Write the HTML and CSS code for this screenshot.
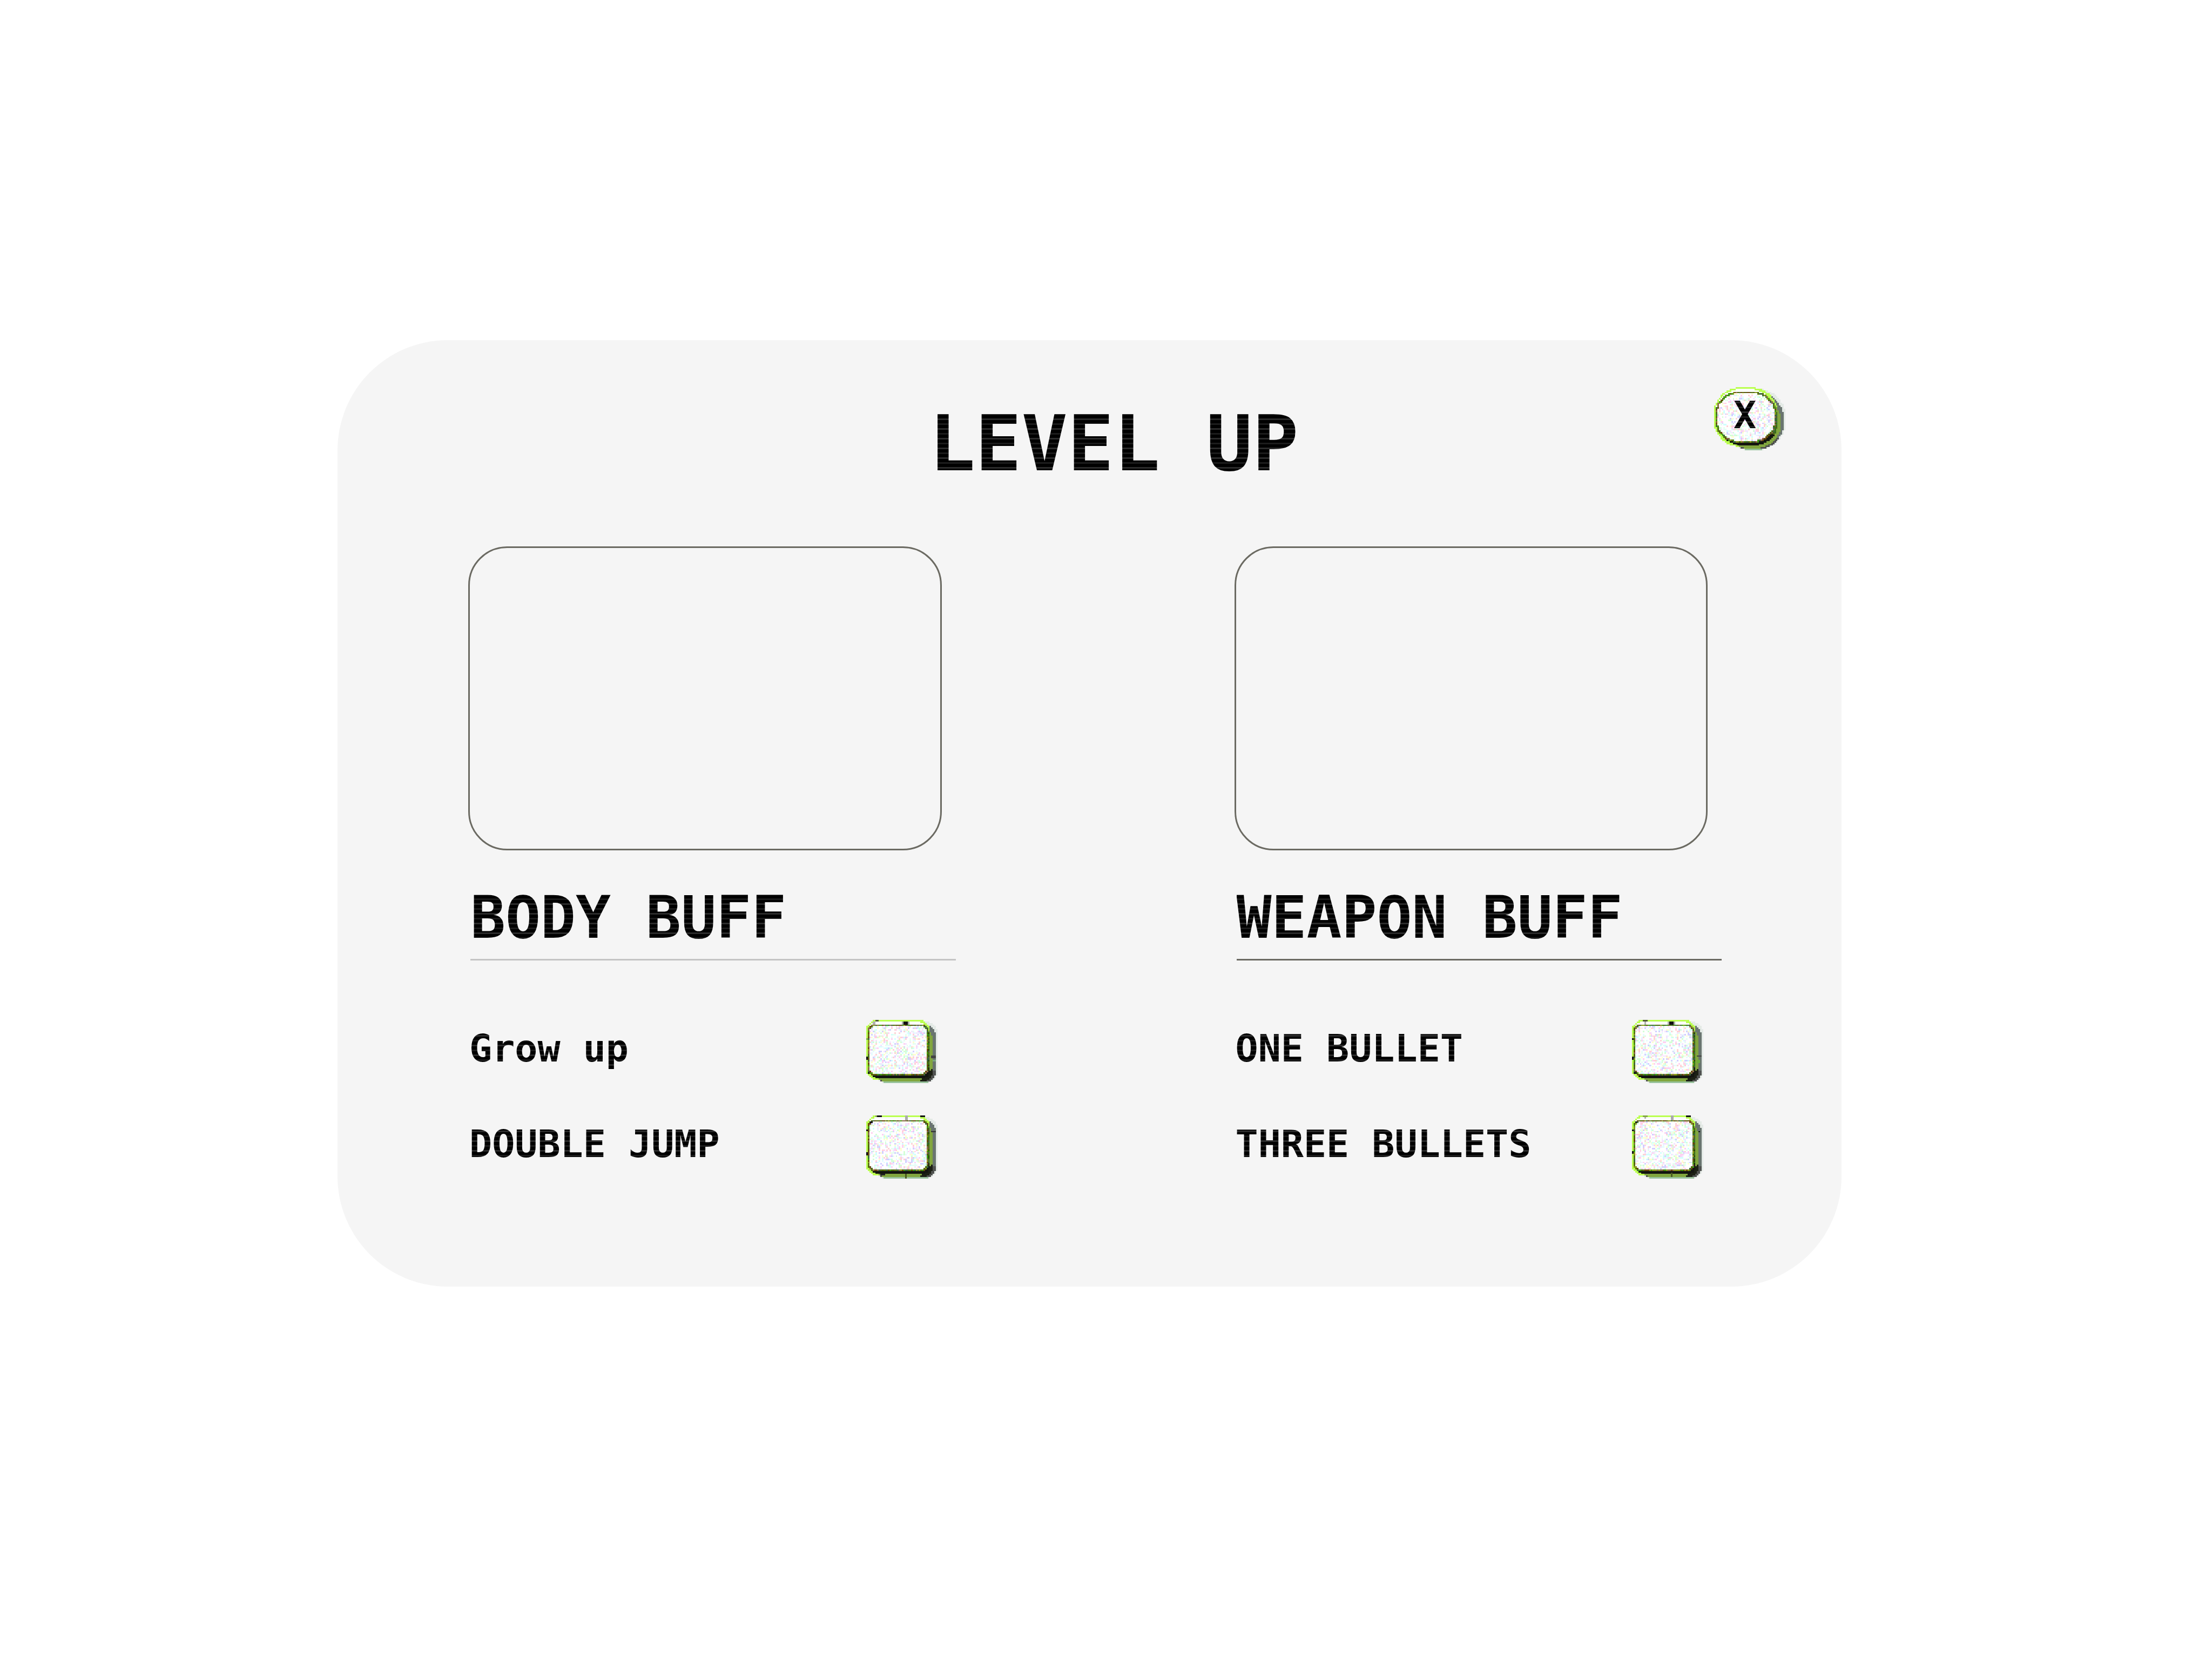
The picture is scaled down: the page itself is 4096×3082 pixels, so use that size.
FILE: index.html
```html
<!DOCTYPE html>
<html lang="en">
<head>
<meta charset="utf-8">
<meta name="viewport" content="width=device-width, initial-scale=1">
<title>Level up</title>
<link rel="stylesheet" href="styles.css">
</head>
<body>
<main class="panel">
  <header class="panel-header">
    <h1 class="title ink">LEVEL UP</h1>
    <button class="key close" type="button" aria-label="Close">
      <svg class="key-art" data-key="round" viewBox="0 0 46 41" aria-hidden="true"></svg>
      <span class="key-text ink">X</span>
    </button>
  </header>
  <div class="columns">
    <section class="buff">
      <div class="preview"></div>
      <h2 class="heading heading-light"><span class="ink">BODY BUFF</span></h2>
      <ul class="options">
        <li class="option">
          <label class="option-name ink" for="grow">Grow up</label>
          <span class="key"><input class="check" type="checkbox" id="grow"><svg class="key-art" data-key="grow" viewBox="0 0 46 41" aria-hidden="true"></svg></span>
        </li>
        <li class="option">
          <label class="option-name ink" for="jump">DOUBLE JUMP</label>
          <span class="key"><input class="check" type="checkbox" id="jump"><svg class="key-art" data-key="jump" viewBox="0 0 46 41" aria-hidden="true"></svg></span>
        </li>
      </ul>
    </section>
    <section class="buff">
      <div class="preview"></div>
      <h2 class="heading"><span class="ink">WEAPON BUFF</span></h2>
      <ul class="options">
        <li class="option">
          <label class="option-name ink" for="one">ONE BULLET</label>
          <span class="key"><input class="check" type="checkbox" id="one"><svg class="key-art" data-key="one" viewBox="0 0 46 41" aria-hidden="true"></svg></span>
        </li>
        <li class="option">
          <label class="option-name ink" for="three">THREE BULLETS</label>
          <span class="key"><input class="check" type="checkbox" id="three"><svg class="key-art" data-key="three" viewBox="0 0 46 41" aria-hidden="true"></svg></span>
        </li>
      </ul>
    </section>
  </div>
</main>
<script src="script.js"></script>
</body>
</html>
```
FILE: styles.css
```css
* {
  box-sizing: border-box;
}

body {
  margin: 0;
  padding: 630px 686px 0 625px;
  background: #fff;
  font-family: "DejaVu Sans Mono", "Liberation Mono", monospace;
  font-weight: 700;
  color: #000;
}

.panel {
  padding: 87px 104px 200px 242px;
  border-radius: 204px;
  background: #f5f5f5;
}

.panel-header {
  display: flex;
  align-items: flex-start;
}

.title {
  flex: 1;
  margin: 25px 0 0;
  padding-left: 84px;
  font-size: 142px;
  line-height: 160px;
  text-align: center;
}

/* Faint scan lines inside the lettering */
.ink {
  background: repeating-linear-gradient(#000 0 6px, #1c1c1c 6px 9px, #000 9px 15px, #2c2c2c 15px 18px);
  background-clip: text;
  -webkit-background-clip: text;
  color: transparent;
}

.columns {
  display: grid;
  grid-template-columns: 1fr 1fr;
  gap: 516px;
  margin-top: 110px;
  padding-right: 118px;
}

.preview {
  margin-right: 26px;
  aspect-ratio: 876 / 563;
  border: 3px solid #6b6a62;
  border-radius: 72px;
}

.heading {
  margin: 65px 0 0 4px;
  padding-bottom: 16px;
  border-bottom: 3px solid #6b6a62;
  font-size: 108px;
  line-height: 120px;
  white-space: nowrap;
}

.heading-light {
  border-bottom-color: #c4c4c4;
}

.heading .ink {
  display: block;
}

.options {
  display: grid;
  gap: 60px;
  margin: 110px 0 0;
  padding: 0 34px 0 2px;
  list-style: none;
}

.option {
  display: flex;
  align-items: center;
  justify-content: space-between;
}

.option-name {
  padding-bottom: 12px;
  font-size: 70px;
  line-height: 80px;
}

.key {
  display: grid;
  flex: none;
  width: 132px;
  height: 117px;
  margin: 0;
  padding: 0;
  border: 0;
  background: none;
  font: inherit;
  cursor: pointer;
}

.key > * {
  grid-area: 1 / 1;
}

.key-art {
  width: 132px;
  height: 117px;
  pointer-events: none;
  shape-rendering: crispEdges;
}

.key-text {
  padding: 0 18px 14px 0;
  place-self: center;
  font-size: 70px;
  line-height: 80px;
}

.check {
  width: 132px;
  height: 117px;
  margin: 0;
  appearance: none;
  cursor: pointer;
}
```
FILE: script.js
```js
// Paints the pixel-style keys, one square per cell of a 46 x 41 grid.
const COLS = 46;
const ROWS = 41;
const NOISE = ['#ffd0f2', '#d2d0ff', '#d0ffff', '#d4ffd6', '#ffffd0', '#ffd2d6', '#f4e4ff', '#e6fff2', '#e6fbff'];
const RIM = ['#4e6a0c', '#8a9a1e', '#3e6a3e', '#6b4a10', '#3f9a10', '#5a7016', '#8a6a4a'];
const DARK_RIM = ['#3c6a1e', '#1f3a0c', '#2e7a14', '#3e5a4e', '#5a5a10', '#26701a'];

// Nicks in the outline: x, y, width, height, colour.
const KEYS = {
  round: { rx: 15, ry: 13, seed: 11, nicks: [] },
  grow: { rx: 4, ry: 4, seed: 3, nicks: [
    [6, 0, 2, 1, '#4f5a30'], [4, 1, 2, 2, '#b0b0b0'], [23, 1, 5, 2, '#aaa'], [24, 1, 3, 2, '#111'],
    [0, 12, 1, 1, '#83a93f'], [0, 24, 1, 2, '#111'], [1, 34, 1, 1, '#111'], [42, 23, 3, 2, '#444'], [43, 26, 2, 1, '#7aa880']] },
  jump: { rx: 4, ry: 4, seed: 7, nicks: [
    [7, 0, 3, 1, '#111'], [6, 0, 1, 1, '#83a93f'], [25, 0, 2, 3, '#aaa'], [35, 0, 3, 1, '#111'], [2, 4, 2, 1, '#111'],
    [0, 9, 1, 1, '#111'], [0, 24, 1, 2, '#111'], [42, 10, 3, 1, '#333'], [25, 38, 1, 3, '#4a5a20'], [9, 38, 3, 1, '#222']] },
  one: { rx: 4, ry: 4, seed: 13, nicks: [
    [7, 0, 3, 1, '#4f5a30'], [8, 1, 1, 2, '#b0b0b0'], [23, 1, 5, 2, '#aaa'], [24, 1, 3, 2, '#111'],
    [0, 12, 1, 1, '#111'], [0, 24, 1, 2, '#111'], [1, 34, 2, 1, '#111'], [42, 23, 3, 1, '#444'], [42, 26, 2, 2, '#6fae3a']] },
  three: { rx: 4, ry: 4, seed: 19, nicks: [
    [7, 0, 3, 1, '#83a93f'], [8, 1, 1, 1, '#b0b0b0'], [25, 0, 2, 3, '#aaa'], [35, 0, 3, 1, '#111'], [2, 4, 1, 1, '#111'],
    [0, 9, 1, 1, '#111'], [0, 23, 1, 2, '#111'], [43, 10, 1, 1, '#111'], [25, 37, 1, 3, '#4a5a20']] }
};

function inside(x, y, x0, y0, x1, y1, rx, ry) {
  const px = x + 0.5;
  const py = y + 0.5;
  if (px < x0 || px > x1 || py < y0 || py > y1) return false;
  const dx = Math.max(x0 + rx - px, px - (x1 - rx), 0) / rx;
  const dy = Math.max(y0 + ry - py, py - (y1 - ry), 0) / ry;
  return dx * dx + dy * dy <= 1;
}

function paint(svg) {
  const { rx, ry, seed, nicks } = KEYS[svg.dataset.key];
  let state = seed * 7919;
  const random = () => {
    state = (state * 1103515245 + 12345) % 2147483648;
    return state / 2147483648;
  };
  const pick = list => list[Math.floor(random() * list.length)];

  const colourAt = (x, y) => {
    if (inside(x, y, 2, 4, 39, 35, rx, ry)) return random() < 0.5 ? '#fff' : pick(NOISE);
    if (inside(x, y, 1, 3, 40, 36, rx, ry)) return pick(RIM);
    if (inside(x, y, 1, 1, 39, 36, rx + 2, ry + 2)) return '#fbfdfa';
    if (y > 30 && inside(x, y, 3, 5, 41, 38, rx + 1, ry + 1)) return '#131510';
    if (x > 34 && inside(x, y, 3, 5, 41, 38, rx + 1, ry + 1)) return pick(DARK_RIM);
    if (inside(x, y, 6, 6, 43, 40, rx + 2, ry + 2)) {
      return x > 33 && x + y > 73 ? '#1c2014' : '#81a63e';
    }
    if (inside(x, y, 0, 0, 41, 39, rx + 3, ry + 3)) return '#baff4f';
    if (inside(x, y, 6, 3, 45, 41, rx + 4, ry + 4)) {
      return y > 39 ? '#98c29c' : y > 32 ? '#505250' : '#6a7570';
    }
    if (inside(x, y, 5, 1, 46, 41, rx + 4, ry + 4)) return '#e4eae6';
    return null;
  };

  const cell = (x, y, width, height, fill) => {
    const rect = document.createElementNS('http://www.w3.org/2000/svg', 'rect');
    Object.entries({ x, y, width, height, fill }).forEach(([name, value]) => rect.setAttribute(name, value));
    svg.append(rect);
  };

  for (let y = 0; y < ROWS; y++) {
    for (let x = 0; x < COLS; x++) {
      const colour = colourAt(x, y);
      if (colour) cell(x, y, 1, 1, colour);
    }
  }
  nicks.forEach(nick => cell(...nick));
}

document.querySelectorAll('.key-art').forEach(paint);
```
